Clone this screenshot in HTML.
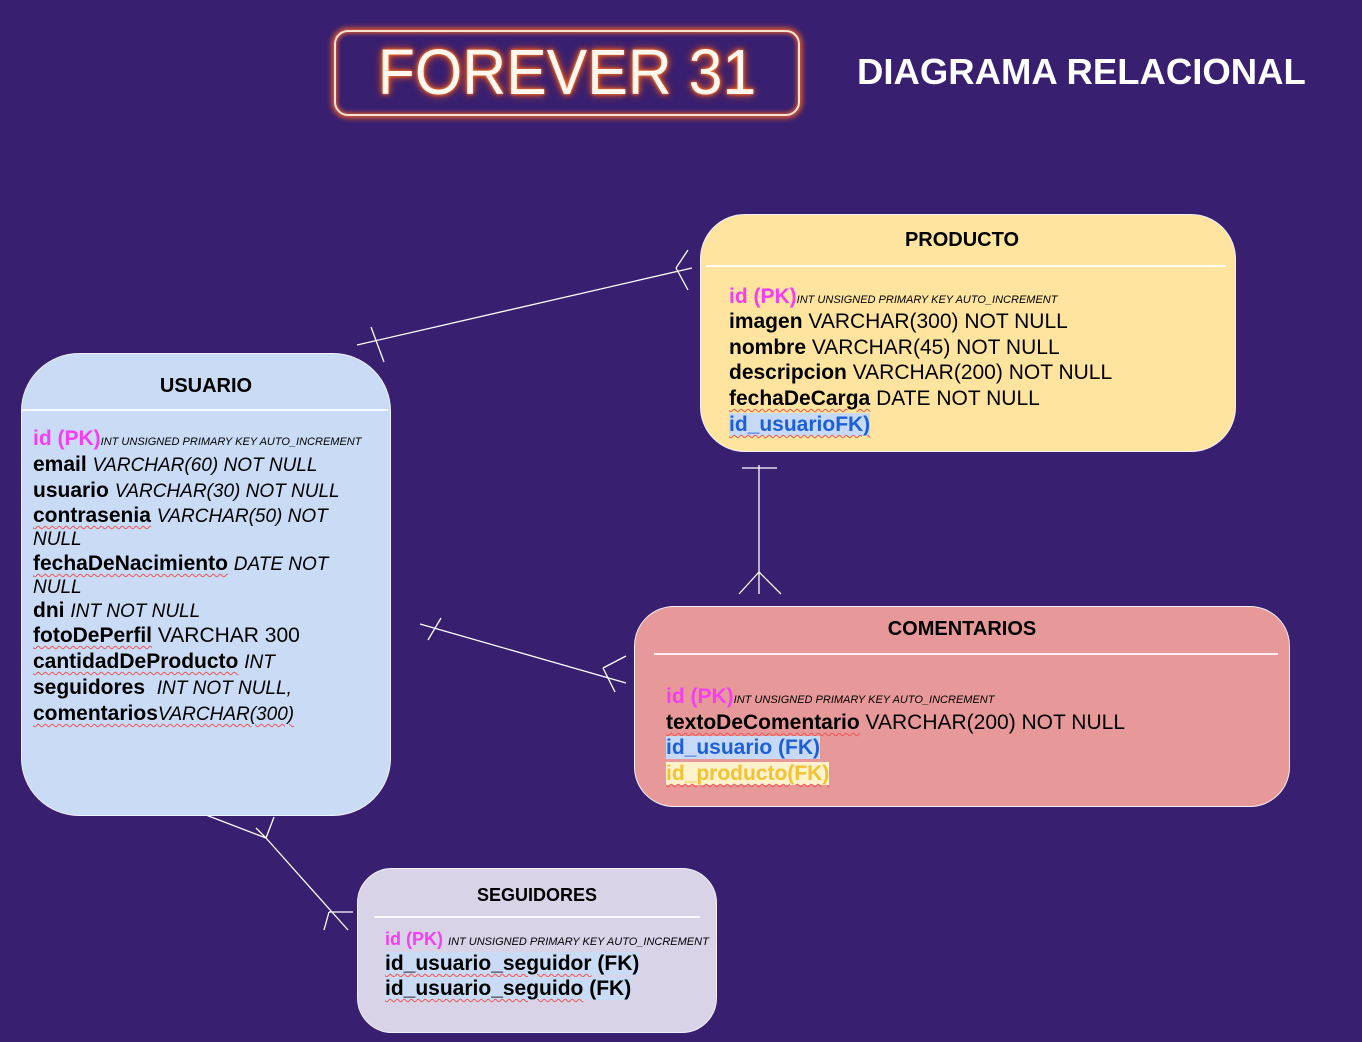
<!DOCTYPE html>
<html><head><meta charset="utf-8"><style>
body{margin:0;width:1362px;height:1042px;background:#381f70;position:relative;overflow:hidden;font-family:"Liberation Sans",sans-serif;}
.a{position:absolute;white-space:nowrap;line-height:24px;}
.box{position:absolute;border:1.5px solid #f2f0f8;box-sizing:border-box;}
.h{position:absolute;font-weight:bold;font-size:20px;text-align:center;line-height:24px;color:#000;}
.d{position:absolute;height:1.5px;background:#fff;opacity:.85;}
.t{font-size:21px;color:#000;}
b{font-weight:bold;}
.pk{color:#f43ef4;font-weight:bold;}
.s{font-size:11px;font-style:italic;}
.i{font-style:italic;}
i{font-size:19px;}
.u{text-decoration:underline wavy #e55;text-decoration-thickness:1px;text-underline-offset:3px;}
.blue{color:#1d5fd6;font-weight:bold;background:#c6d9f6;}
.yel{color:#f1c232;font-weight:bold;background:#fff2cc;}
</style></head><body>
<div style="position:absolute;left:334px;top:30px;width:466px;height:86px;border:2.5px solid #fde3d0;border-radius:14px;box-sizing:border-box;box-shadow:0 0 6px 2px #f0642a, inset 0 0 5px 1px #f0642a;"></div>
<div class="a" style="left:334px;top:34px;width:466px;text-align:center;line-height:76px;font-size:64px;color:#fff8ee;letter-spacing:0px;transform:scaleX(0.95);text-shadow:0 0 3px #ff7a2a,0 0 6px #f06020,0 0 10px #e05018;">FOREVER 31</div>
<div class="a" style="left:857px;top:52px;line-height:40px;font-size:36.5px;font-weight:bold;color:#fff;">DIAGRAMA RELACIONAL</div>

<svg width="1362" height="1042" style="position:absolute;left:0;top:0" stroke="#fff" stroke-width="1.3" fill="none">
<line x1="357" y1="345" x2="692" y2="268"/>
<line x1="371" y1="327" x2="384" y2="362"/>
<line x1="676" y1="268" x2="688" y2="250"/><line x1="676" y1="268" x2="688" y2="290"/>
<line x1="759" y1="465" x2="759" y2="594"/>
<line x1="742" y1="468" x2="777" y2="468"/>
<line x1="759" y1="572" x2="739" y2="594"/><line x1="759" y1="572" x2="781" y2="594"/>
<line x1="420" y1="624" x2="626" y2="683"/>
<line x1="441" y1="618" x2="428" y2="640"/>
<line x1="603" y1="668" x2="626" y2="656"/><line x1="603" y1="668" x2="615" y2="692"/>
<line x1="206" y1="815" x2="266" y2="838"/>
<line x1="266" y1="838" x2="348" y2="930"/>
<line x1="274" y1="817" x2="266" y2="838"/><line x1="256" y1="828" x2="266" y2="838"/>
<line x1="329" y1="912" x2="353" y2="912"/><line x1="329" y1="912" x2="324" y2="930"/>
</svg>

<!-- USUARIO -->
<div class="box" style="left:21px;top:353px;width:370px;height:463px;border-radius:58px;background:#c9dbf5;"></div>
<div class="h" style="left:21px;width:370px;top:374px;">USUARIO</div>
<div class="d" style="left:22px;top:409px;width:366px;"></div>
<div class="a t" style="left:33px;top:427px;"><span class="pk">id (PK)</span><span class="s">INT UNSIGNED PRIMARY KEY AUTO_INCREMENT</span></div>
<div class="a t" style="left:33px;top:453px;"><b>email</b> <i>VARCHAR(60) NOT NULL</i></div>
<div class="a t" style="left:33px;top:479px;"><b>usuario</b> <i>VARCHAR(30) NOT NULL</i></div>
<div class="a t" style="left:33px;top:504px;"><b class="u">contrasenia</b> <i>VARCHAR(50) NOT</i></div>
<div class="a t" style="left:33px;top:527px;"><i>NULL</i></div>
<div class="a t" style="left:33px;top:552px;"><b class="u">fechaDeNacimiento</b> <i>DATE NOT</i></div>
<div class="a t" style="left:33px;top:575px;"><i>NULL</i></div>
<div class="a t" style="left:33px;top:599px;"><b>dni</b> <i>INT NOT NULL</i></div>
<div class="a t" style="left:33px;top:624px;"><b class="u">fotoDePerfil</b> VARCHAR 300</div>
<div class="a t" style="left:33px;top:650px;"><b class="u">cantidadDeProducto</b> <i>INT</i></div>
<div class="a t" style="left:33px;top:676px;"><b>seguidores</b>&nbsp; <i>INT NOT NULL,</i></div>
<div class="a t" style="left:33px;top:702px;"><b class="u">comentarios</b><i class="u">VARCHAR(300)</i></div>

<!-- PRODUCTO -->
<div class="box" style="left:700px;top:214px;width:536px;height:238px;border-radius:45px;background:#fee49e;"></div>
<div class="h" style="left:700px;width:524px;top:228px;">PRODUCTO</div>
<div class="d" style="left:706px;top:265px;width:520px;"></div>
<div class="a t" style="left:729px;top:285px;"><span class="pk">id (PK)</span><span class="s">INT UNSIGNED PRIMARY KEY AUTO_INCREMENT</span></div>
<div class="a t" style="left:729px;top:310px;"><b>imagen</b> VARCHAR(300) NOT NULL</div>
<div class="a t" style="left:729px;top:336px;"><b>nombre</b> VARCHAR(45) NOT NULL</div>
<div class="a t" style="left:729px;top:361px;"><b>descripcion</b> VARCHAR(200) NOT NULL</div>
<div class="a t" style="left:729px;top:387px;"><b class="u">fechaDeCarga</b> DATE NOT NULL</div>
<div class="a t" style="left:729px;top:413px;"><span class="blue u">id_usuarioFK)</span></div>

<!-- COMENTARIOS -->
<div class="box" style="left:634px;top:606px;width:656px;height:201px;border-radius:40px;background:#e79898;"></div>
<div class="h" style="left:634px;width:656px;top:617px;">COMENTARIOS</div>
<div class="d" style="left:654px;top:653px;width:624px;"></div>
<div class="a t" style="left:666px;top:685px;"><span class="pk">id (PK)</span><span class="s">INT UNSIGNED PRIMARY KEY AUTO_INCREMENT</span></div>
<div class="a t" style="left:666px;top:711px;"><b class="u">textoDeComentario</b> VARCHAR(200) NOT NULL</div>
<div class="a t" style="left:666px;top:736px;"><span class="blue">id_usuario (FK)</span></div>
<div class="a t" style="left:666px;top:762px;"><span class="yel u">id_producto(FK)</span></div>

<!-- SEGUIDORES -->
<div class="box" style="left:357px;top:868px;width:360px;height:165px;border-radius:35px;background:#d9d3e8;"></div>
<div class="h" style="left:357px;width:360px;top:883px;font-size:18px;">SEGUIDORES</div>
<div class="d" style="left:374px;top:916px;width:326px;"></div>
<div class="a" style="left:385px;top:927px;font-size:18px;"><span class="pk">id (PK)</span> <span class="s">INT UNSIGNED PRIMARY KEY AUTO_INCREMENT</span></div>
<div class="a t" style="left:385px;top:952px;"><b style="background:#c9dbf5"><span class="u">id_usuario_seguidor</span> (FK)</b></div>
<div class="a t" style="left:385px;top:977px;"><b style="background:#c9dbf5"><span class="u">id_usuario_seguido</span> (FK)</b></div>
</body></html>
